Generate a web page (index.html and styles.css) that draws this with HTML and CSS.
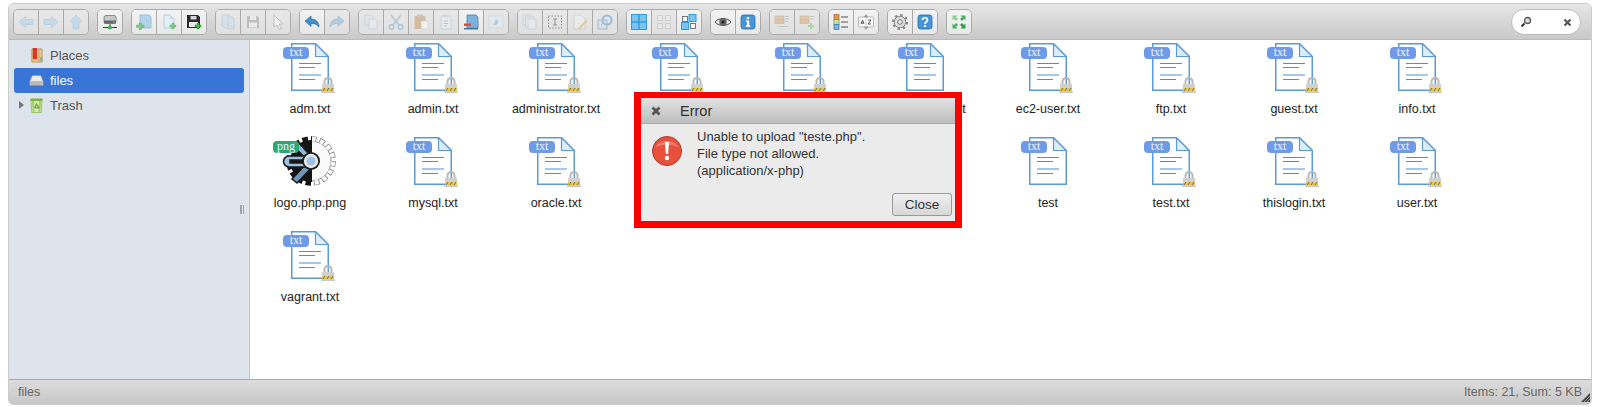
FILE: index.html
```html
<!DOCTYPE html>
<html lang="en">
<head>
    <meta charset="UTF-8">
    <title>files</title>
    <link rel="stylesheet" href="styles.css">
</head>
<body>
    <svg class="icon-defs" width="0" height="0">
        <defs>
            <clipPath id="clip-gear-left"><rect x="0" y="0" width="31" height="52"/></clipPath>
            <clipPath id="clip-gear-right"><rect x="31" y="0" width="29" height="52"/></clipPath>
        </defs>

        <!-- file types -->
        <symbol id="f-doc" viewBox="0 0 50 50">
            <path d="M5.750 .75H29.500L42.250 13.500V47.250H5.750Z" fill="#fff" stroke="#5b9bd5" stroke-width="1.500"/>
            <path d="M29.500 .75V13.500H42.250Z" fill="#dcecf8" stroke="#5b9bd5" stroke-width="1.200" stroke-linejoin="round"/>
            <path d="M13 20.500H35M13 24.500H29M13 32H35M13 36.500H29" stroke="#4a90d9" stroke-width="1.200"/>
        </symbol>
        <symbol id="f-lock" viewBox="0 0 50 50">
            <path d="M38.500 41.500V38.500a3.500 3.500 0 0 1 7 0V41.500" fill="none" stroke="#b8b8b8" stroke-width="2"/>
            <rect x="36" y="41" width="12" height="8" fill="#d0d0d0"/>
            <rect x="36" y="45" width="12" height="3" fill="#ecca4e"/>
            <path d="M37 48l2-3M41 48l2-3M45 48l2-3" stroke="#666" stroke-width="1"/>
            <rect x="35" y="48.500" width="14" height="1.500" fill="#c8c8c8"/>
        </symbol>
        <symbol id="f-logo" viewBox="0 0 60 52">
            <g clip-path="url(#clip-gear-right)">
                <circle cx="30" cy="26" r="22.300" pathLength="160" fill="none" stroke="#777" stroke-width="5" stroke-dasharray="6.400 3.600"/>
                <circle cx="30" cy="26" r="20" fill="#fafafa" stroke="#777" stroke-width=".8"/>
                <circle cx="30" cy="26" r="22" pathLength="160" fill="none" stroke="#fafafa" stroke-width="4.400" stroke-dasharray="4.800 5.200" stroke-dashoffset="-.8"/>
            </g>
            <g clip-path="url(#clip-gear-left)">
                <circle cx="30" cy="26" r="21" fill="#141414"/>
                <circle cx="30" cy="26" r="22.300" pathLength="160" fill="none" stroke="#141414" stroke-width="5" stroke-dasharray="6.400 3.600"/>
            </g>
            <path d="M17 7L37 29L33 33L13 11Z" fill="#8fb8dc" stroke="#1a1a1a" stroke-width="1.500"/>
            <path d="M30 24L11 44L16 48L34 29Z" fill="#6f98bd" stroke="#1a1a1a" stroke-width="1.500"/>
            <path d="M27 21H8a5.500 5.500 0 0 0 0 11H27V28H9v-3H27Z" fill="#9bbfe0" stroke="#1a1a1a" stroke-width="1.500"/>
            <circle cx="30" cy="26" r="9" fill="#1a1a1a"/>
            <circle cx="30" cy="26" r="7.200" fill="#e8e8e8"/>
            <circle cx="30" cy="26" r="4.600" fill="#9cc3e6"/>
        </symbol>

        <!-- sidebar -->
        <symbol id="s-places" viewBox="0 0 16 16">
            <path d="M3 1H14V15H3Z" fill="#ecc98a" stroke="#b08a45" stroke-width=".8"/>
            <rect x="4" y="0" width="4.500" height="12" fill="#d9352c"/>
            <path d="M10.500 1V15" stroke="#c9a05a"/>
            <rect x="12" y="10" width="2" height="3.500" fill="#6aa6d8"/>
        </symbol>
        <symbol id="s-drive" viewBox="0 0 16 16">
            <path d="M3.500 3H12.500L15 9V13H1V9Z" fill="#ececec" stroke="#bbb" stroke-width=".5"/>
            <rect x="1" y="8.500" width="14" height="5" rx="1" fill="#bcbcbc"/>
            <rect x="2" y="13" width="12" height="1" fill="#8a8a8a"/>
        </symbol>
        <symbol id="s-trash" viewBox="0 0 16 16">
            <path d="M2 1.500H14L13 15.500H3Z" fill="#dcedc6" stroke="#8ab54d" stroke-width=".8"/>
            <path d="M3 3H5.500L6 15H4Z" fill="#a5d06a"/>
            <path d="M13 3H10.500L10 15H12Z" fill="#a5d06a"/>
            <rect x="1.500" y=".5" width="13" height="2.800" rx="1" fill="#7cb342"/>
            <path d="M6 11L8 6.500L10.500 10.500H7" fill="none" stroke="#6da22f" stroke-width="1.300"/>
        </symbol>

        <!-- toolbar -->
        <symbol id="t-back" viewBox="0 0 16 16">
            <path d="M1 8L7.500 2.500V5.500H15V10.500H7.500V13.500Z" fill="#a5d2f0" stroke="#84b9dd" stroke-width=".8"/>
        </symbol>
        <symbol id="t-forward" viewBox="0 0 16 16">
            <path d="M15 8L8.500 2.500V5.500H1V10.500H8.500V13.500Z" fill="#a5d2f0" stroke="#84b9dd" stroke-width=".8"/>
        </symbol>
        <symbol id="t-up" viewBox="0 0 16 16">
            <path d="M8 1L14 7.500H11V15H5V7.500H2Z" fill="#a5d2f0" stroke="#84b9dd" stroke-width=".8"/>
        </symbol>
        <symbol id="t-net" viewBox="0 0 16 16">
            <rect x="2" y="1.500" width="12" height="8" rx="2" fill="#c9c9c9" stroke="#777" stroke-width=".8"/>
            <rect x="2" y="6.500" width="12" height="3" fill="#666"/>
            <rect x="11" y="7.500" width="2" height="1" fill="#5fd35f"/>
            <path d="M1 13.500H15M8 10V13" stroke="#444"/>
            <circle cx="8" cy="13.500" r="2" fill="#37b24d"/>
        </symbol>
        <symbol id="t-mkdir" viewBox="0 0 16 16">
            <path d="M4 1H13L15 3V14H4Z" fill="#b4d2ea" stroke="#8fb6d6" stroke-width=".8"/>
            <path d="M3 9h2.500v2H8v2.500H5.500v2H3v-2H.5V11H3Z" fill="#7ccb80" stroke="#56a85c" stroke-width=".4"/>
        </symbol>
        <symbol id="t-mkfile" viewBox="0 0 16 16">
            <path d="M3 1H9L13 5V14H3Z" fill="#e4eff8" stroke="#a6c6e0" stroke-width=".8"/>
            <path d="M9 1V5H13Z" fill="#c4dcef"/>
            <path d="M11 9h2v2h2v2h-2v2h-2v-2H9v-2h2Z" fill="#7ccb80" stroke="#56a85c" stroke-width=".4"/>
        </symbol>
        <symbol id="t-upload" viewBox="0 0 16 16">
            <path d="M1 1H12L14 3V14H1Z" fill="#2a2a2a"/>
            <rect x="4.500" y="2" width="6" height="3.500" fill="#d4d4d4"/>
            <rect x="3" y="8" width="9" height="5" fill="#eaeaea"/>
            <path d="M11 9h2v2h2v2h-2v2h-2v-2H9v-2h2Z" fill="#43b649" stroke="#2c8a34" stroke-width=".4"/>
        </symbol>
        <symbol id="t-open" viewBox="0 0 16 16">
            <path d="M2 1H9L14 4V15H7L2 12Z" fill="#c8dcec" stroke="#9db9cf" stroke-width=".8"/>
            <path d="M8 1V13" stroke="#9db9cf" stroke-width=".8"/>
        </symbol>
        <symbol id="t-save" viewBox="0 0 16 16">
            <path d="M2 2H12L14 4V14H2Z" fill="#999"/>
            <rect x="5" y="2" width="6" height="4" fill="#eee"/>
            <rect x="4" y="8.500" width="8" height="5" fill="#eee"/>
        </symbol>
        <symbol id="t-pointer" viewBox="0 0 16 16">
            <path d="M4 1L13 10H9L11.500 15L9.500 15.500L7 11L4 13Z" fill="#fff" stroke="#888" stroke-width=".8"/>
        </symbol>
        <symbol id="t-undo" viewBox="0 0 16 16">
            <path d="M1 7L7 2V5C12 5 15 8 15 13C13 10.500 11 9.500 7 9.500V12.500Z" fill="#3f8fd2" stroke="#1f5f96" stroke-width=".6"/>
        </symbol>
        <symbol id="t-redo" viewBox="0 0 16 16">
            <path d="M15 7L9 2V5C4 5 1 8 1 13C3 10.500 5 9.500 9 9.500V12.500Z" fill="#7fb2dd" stroke="#5a90bd" stroke-width=".6"/>
        </symbol>
        <symbol id="t-copy" viewBox="0 0 16 16">
            <path d="M2 1H8L10 3V11H2Z" fill="#dce8f2" stroke="#a2bbcf" stroke-width=".8"/>
            <path d="M6 5H12L14 7V15H6Z" fill="#e8f0f7" stroke="#a2bbcf" stroke-width=".8"/>
        </symbol>
        <symbol id="t-cut" viewBox="0 0 16 16">
            <path d="M3 1L11 11M13 1L5 11" stroke="#8fa9bd" stroke-width="1.600"/>
            <circle cx="3.500" cy="13" r="2.300" fill="none" stroke="#6fa8d6" stroke-width="1.400"/>
            <circle cx="12.500" cy="13" r="2.300" fill="none" stroke="#6fa8d6" stroke-width="1.400"/>
        </symbol>
        <symbol id="t-paste" viewBox="0 0 16 16">
            <rect x="1.500" y="2" width="11" height="13" rx="1" fill="#c9925a"/>
            <rect x="4" y=".5" width="6" height="3" fill="#a8a8a8"/>
            <path d="M8 7H13L15 9V15H8Z" fill="#fff" stroke="#bbb" stroke-width=".6"/>
        </symbol>
        <symbol id="t-duplicate" viewBox="0 0 16 16">
            <rect x="3" y="2" width="10" height="13" rx="1" fill="#eef3f7" stroke="#9fb3c2" stroke-width=".8"/>
            <rect x="5.500" y=".8" width="5" height="2.500" fill="#b5c5d2"/>
            <path d="M6 7H10M6 9.500H10M6 12H9" stroke="#7ea4bf"/>
        </symbol>
        <symbol id="t-rm" viewBox="0 0 16 16">
            <path d="M4 1H13L15 3V14H4Z" fill="#6aa6d8" stroke="#356f9f" stroke-width=".8"/>
            <rect x="1" y="14" width="14" height="1.500" fill="#2f5f8a"/>
            <rect x="1" y="9.500" width="7" height="2.500" fill="#d9332b"/>
        </symbol>
        <symbol id="t-extract" viewBox="0 0 16 16">
            <rect x="1" y="2" width="14" height="12" fill="#e2edf5" stroke="#b8ccdb" stroke-width=".8"/>
            <path d="M5 11L8 5L11 7.500L8.500 11Z" fill="#8fb2cc"/>
        </symbol>
        <symbol id="t-selectall" viewBox="0 0 16 16">
            <rect x="1" y="1" width="8" height="10" fill="#dde8f1" stroke="#9fb7ca" stroke-width=".8"/>
            <rect x="3.500" y="3" width="8" height="10" fill="#e3ecf3" stroke="#9fb7ca" stroke-width=".8"/>
            <rect x="6" y="5" width="8" height="10" fill="#ebf2f7" stroke="#9fb7ca" stroke-width=".8"/>
        </symbol>
        <symbol id="t-rename" viewBox="0 0 16 16">
            <rect x="1.500" y="2" width="13" height="12" fill="none" stroke="#444" stroke-dasharray="1.500 1.500"/>
            <path d="M6 5H10M6 11H10M8 5V11" stroke="#444"/>
        </symbol>
        <symbol id="t-edit" viewBox="0 0 16 16">
            <path d="M2 1H9L13 5V15H2Z" fill="#edf2f6" stroke="#a8bbc9" stroke-width=".8"/>
            <path d="M6 14L14 6L15.500 7.500L7.500 15.500L5.500 15.500Z" fill="#d8b45a"/>
        </symbol>
        <symbol id="t-resize" viewBox="0 0 16 16">
            <rect x="1" y="6" width="9" height="9" fill="#cfe0ee" stroke="#5d8cb3" stroke-width=".9"/>
            <circle cx="10" cy="6" r="4.500" fill="none" stroke="#4f94cc" stroke-width="2"/>
            <path d="M4 11L7 8" stroke="#5d8cb3"/>
        </symbol>
        <symbol id="t-icons" viewBox="0 0 16 16">
            <rect x=".5" y=".5" width="15" height="15" fill="#7cc4f0" stroke="#2f9be0"/>
            <path d="M8 0V16M0 8H16" stroke="#2f9be0" stroke-width="1.500"/>
        </symbol>
        <symbol id="t-grid" viewBox="0 0 16 16">
            <rect x="1.500" y="1.500" width="5" height="5" fill="#f0f0f0" stroke="#bcbcbc"/>
            <rect x="9.500" y="1.500" width="5" height="5" fill="#f0f0f0" stroke="#bcbcbc"/>
            <rect x="1.500" y="9.500" width="5" height="5" fill="#f0f0f0" stroke="#bcbcbc"/>
            <rect x="9.500" y="9.500" width="5" height="5" fill="#f0f0f0" stroke="#bcbcbc"/>
        </symbol>
        <symbol id="t-mixed" viewBox="0 0 16 16">
            <rect x="1.500" y="2.500" width="5" height="5" fill="#fff" stroke="#777"/>
            <rect x="8" y=".5" width="7" height="7" fill="#7cc4f0" stroke="#2f9be0"/>
            <rect x=".5" y="8.500" width="7" height="7" fill="#7cc4f0" stroke="#2f9be0"/>
            <rect x="9.500" y="9.500" width="5" height="5" fill="#fff" stroke="#777"/>
        </symbol>
        <symbol id="t-eye" viewBox="0 0 16 16">
            <path d="M0 8C3 3.500 13 3.500 16 8C13 12.500 3 12.500 0 8Z" fill="#e8e8e8" stroke="#444"/>
            <circle cx="8" cy="8" r="3.700" fill="#666"/>
            <circle cx="8" cy="8" r="1.500" fill="#222"/>
        </symbol>
        <symbol id="t-info" viewBox="0 0 16 16">
            <rect x="1" y="1" width="14" height="14" rx="2.500" fill="#4a95d6" stroke="#2a6ba6" stroke-width=".8"/>
            <rect x="6.800" y="3" width="2.400" height="2.200" fill="#fff"/>
            <path d="M6 6.500H9.200V11.500H10.200V13H6V11.500H7V8H6Z" fill="#fff"/>
        </symbol>
        <symbol id="t-archive" viewBox="0 0 16 16">
            <rect x="1" y="2" width="9" height="3.500" fill="#dcae7c" stroke="#b5875a" stroke-width=".6"/>
            <rect x="1" y="6" width="9" height="3.500" fill="#d9a877" stroke="#b5875a" stroke-width=".6"/>
            <path d="M11 2.500H15M11 5H15M11 7.500H14M4 12.500H14" stroke="#aaa"/>
        </symbol>
        <symbol id="t-archive-add" viewBox="0 0 16 16">
            <rect x="1" y="2" width="9" height="3.500" fill="#dcae7c" stroke="#b5875a" stroke-width=".6"/>
            <rect x="1" y="6" width="9" height="3.500" fill="#d9a877" stroke="#b5875a" stroke-width=".6"/>
            <path d="M11 2.500H15M11 5H15" stroke="#aaa"/>
            <path d="M11 9h2v2h2v2h-2v2h-2v-2H9v-2h2Z" fill="#74c67a"/>
        </symbol>
        <symbol id="t-list" viewBox="0 0 16 16">
            <rect x="1" y=".5" width="5" height="5" fill="#e8964f" stroke="#a86a30" stroke-width=".7"/>
            <rect x="1" y="5.500" width="5" height="5" fill="#bfe3a0" stroke="#5b9a3c" stroke-width=".7"/>
            <rect x="1" y="10.500" width="5" height="5" fill="#7cb0e0" stroke="#3b75ad" stroke-width=".7"/>
            <path d="M8 3H15M8 8H15M8 13H15" stroke="#555" stroke-width="1.200"/>
        </symbol>
        <symbol id="t-sort" viewBox="0 0 16 16">
            <rect x=".5" y="3" width="15" height="10" rx="1" fill="#fff" stroke="#999" stroke-width=".7"/>
            <path d="M8 .5L10 3H6ZM8 15.500L10 13H6ZM8 3V13" fill="#999" stroke="#999" stroke-width=".5"/>
            <path d="M3 10L4.500 6L6 10M3.500 9H5.500M10 6H13L10 10H13" fill="none" stroke="#444" stroke-width=".9"/>
        </symbol>
        <symbol id="t-prefs" viewBox="0 0 16 16">
            <circle cx="8" cy="8" r="5.800" fill="#dcdcdc" stroke="#888"/>
            <circle cx="8" cy="8" r="7" fill="none" stroke="#888" stroke-width="2" stroke-dasharray="2.400 3.100"/>
            <circle cx="8" cy="8" r="2.300" fill="#eee" stroke="#777"/>
        </symbol>
        <symbol id="t-help" viewBox="0 0 16 16">
            <rect x="1" y="1" width="14" height="14" rx="2.500" fill="#4a95d6" stroke="#2a6ba6" stroke-width=".8"/>
            <path d="M5.500 6C5.500 3 10.500 3 10.500 6C10.500 8 8 8 8 10" fill="none" stroke="#fff" stroke-width="1.700"/>
            <rect x="7" y="11" width="2" height="2" fill="#fff"/>
        </symbol>
        <symbol id="t-full" viewBox="0 0 16 16">
            <path d="M1.500 1.500H6.500L5 3L7 5L5 7L3 5L1.500 6.500Z" fill="#8ccf8c"/>
            <path d="M14.500 1.500H9.500L11 3L9 5L11 7L13 5L14.500 6.500Z" fill="#4fae5f"/>
            <path d="M1.500 14.500H6.500L5 13L7 11L5 9L3 11L1.500 9.500Z" fill="#4fae5f"/>
            <path d="M14.500 14.500H9.500L11 13L9 11L11 9L13 11L14.500 9.500Z" fill="#3a9a4e"/>
        </symbol>
    </svg>

    <div class="finder">
        <div class="toolbar">
            <div class="tool-group">
                <div class="tool-btn off"><svg><use href="#t-back"/></svg></div>
                <div class="tool-btn off"><svg><use href="#t-forward"/></svg></div>
                <div class="tool-btn off"><svg><use href="#t-up"/></svg></div>
            </div>
            <div class="tool-group">
                <div class="tool-btn"><svg><use href="#t-net"/></svg></div>
            </div>
            <div class="tool-group">
                <div class="tool-btn"><svg><use href="#t-mkdir"/></svg></div>
                <div class="tool-btn"><svg><use href="#t-mkfile"/></svg></div>
                <div class="tool-btn"><svg><use href="#t-upload"/></svg></div>
            </div>
            <div class="tool-group">
                <div class="tool-btn off"><svg><use href="#t-open"/></svg></div>
                <div class="tool-btn off"><svg><use href="#t-save"/></svg></div>
                <div class="tool-btn off"><svg><use href="#t-pointer"/></svg></div>
            </div>
            <div class="tool-group">
                <div class="tool-btn"><svg><use href="#t-undo"/></svg></div>
                <div class="tool-btn off"><svg><use href="#t-redo"/></svg></div>
            </div>
            <div class="tool-group">
                <div class="tool-btn off"><svg><use href="#t-copy"/></svg></div>
                <div class="tool-btn off"><svg><use href="#t-cut"/></svg></div>
                <div class="tool-btn off"><svg><use href="#t-paste"/></svg></div>
                <div class="tool-btn off"><svg><use href="#t-duplicate"/></svg></div>
                <div class="tool-btn dim"><svg><use href="#t-rm"/></svg></div>
                <div class="tool-btn off"><svg><use href="#t-extract"/></svg></div>
            </div>
            <div class="tool-group">
                <div class="tool-btn off"><svg><use href="#t-selectall"/></svg></div>
                <div class="tool-btn off"><svg><use href="#t-rename"/></svg></div>
                <div class="tool-btn off"><svg><use href="#t-edit"/></svg></div>
                <div class="tool-btn off"><svg><use href="#t-resize"/></svg></div>
            </div>
            <div class="tool-group">
                <div class="tool-btn"><svg><use href="#t-icons"/></svg></div>
                <div class="tool-btn off"><svg><use href="#t-grid"/></svg></div>
                <div class="tool-btn"><svg><use href="#t-mixed"/></svg></div>
            </div>
            <div class="tool-group">
                <div class="tool-btn"><svg><use href="#t-eye"/></svg></div>
                <div class="tool-btn"><svg><use href="#t-info"/></svg></div>
            </div>
            <div class="tool-group">
                <div class="tool-btn off"><svg><use href="#t-archive"/></svg></div>
                <div class="tool-btn off"><svg><use href="#t-archive-add"/></svg></div>
            </div>
            <div class="tool-group">
                <div class="tool-btn"><svg><use href="#t-list"/></svg></div>
                <div class="tool-btn"><svg><use href="#t-sort"/></svg></div>
            </div>
            <div class="tool-group">
                <div class="tool-btn"><svg><use href="#t-prefs"/></svg></div>
                <div class="tool-btn"><svg><use href="#t-help"/></svg></div>
            </div>
            <div class="tool-group">
                <div class="tool-btn"><svg><use href="#t-full"/></svg></div>
            </div>
            <div class="search-box">
                <svg class="search-glass" width="12" height="12" viewBox="0 0 12 12">
                    <path d="M4.500 7.500L1.500 10.500" stroke="#333" stroke-width="2.200"/>
                    <circle cx="7.500" cy="4.500" r="3" fill="#ddd" stroke="#555" stroke-width="1.300"/>
                </svg>
                <svg class="search-clear" width="9" height="9" viewBox="0 0 9 9">
                    <path d="M1.500 1.500L7.500 7.500M7.500 1.500L1.500 7.500" stroke="#555" stroke-width="2.200"/>
                </svg>
            </div>
        </div>

        <div class="main">
            <div class="sidebar">
                <div class="tree-row">
                    <svg class="tree-icon"><use href="#s-places"/></svg>
                    <span>Places</span>
                </div>
                <div class="tree-row active">
                    <svg class="tree-icon"><use href="#s-drive"/></svg>
                    <span>files</span>
                </div>
                <div class="tree-row">
                    <span class="tree-arrow"></span>
                    <svg class="tree-icon"><use href="#s-trash"/></svg>
                    <span>Trash</span>
                </div>
                <div class="splitter"></div>
            </div>

            <div class="files">
                <div class="file"><div class="file-icon"><svg><use href="#f-doc"/><use href="#f-lock"/></svg><span class="kind txt">txt</span></div><div class="file-name">adm.txt</div></div>
                <div class="file"><div class="file-icon"><svg><use href="#f-doc"/><use href="#f-lock"/></svg><span class="kind txt">txt</span></div><div class="file-name">admin.txt</div></div>
                <div class="file"><div class="file-icon"><svg><use href="#f-doc"/><use href="#f-lock"/></svg><span class="kind txt">txt</span></div><div class="file-name">administrator.txt</div></div>
                <div class="file"><div class="file-icon"><svg><use href="#f-doc"/><use href="#f-lock"/></svg><span class="kind txt">txt</span></div><div class="file-name"></div></div>
                <div class="file"><div class="file-icon"><svg><use href="#f-doc"/><use href="#f-lock"/></svg><span class="kind txt">txt</span></div><div class="file-name"></div></div>
                <div class="file"><div class="file-icon"><svg><use href="#f-doc"/></svg><span class="kind txt">txt</span></div><div class="file-name">deployment.txt</div></div>
                <div class="file"><div class="file-icon"><svg><use href="#f-doc"/><use href="#f-lock"/></svg><span class="kind txt">txt</span></div><div class="file-name">ec2-user.txt</div></div>
                <div class="file"><div class="file-icon"><svg><use href="#f-doc"/><use href="#f-lock"/></svg><span class="kind txt">txt</span></div><div class="file-name">ftp.txt</div></div>
                <div class="file"><div class="file-icon"><svg><use href="#f-doc"/><use href="#f-lock"/></svg><span class="kind txt">txt</span></div><div class="file-name">guest.txt</div></div>
                <div class="file"><div class="file-icon"><svg><use href="#f-doc"/><use href="#f-lock"/></svg><span class="kind txt">txt</span></div><div class="file-name">info.txt</div></div>

                <div class="file"><div class="file-icon"><svg class="logo-img" viewBox="0 0 60 52"><use href="#f-logo"/></svg><span class="kind png">png</span></div><div class="file-name">logo.php.png</div></div>
                <div class="file"><div class="file-icon"><svg><use href="#f-doc"/><use href="#f-lock"/></svg><span class="kind txt">txt</span></div><div class="file-name">mysql.txt</div></div>
                <div class="file"><div class="file-icon"><svg><use href="#f-doc"/><use href="#f-lock"/></svg><span class="kind txt">txt</span></div><div class="file-name">oracle.txt</div></div>
                <div class="file"></div>
                <div class="file"></div>
                <div class="file"></div>
                <div class="file"><div class="file-icon"><svg><use href="#f-doc"/></svg><span class="kind txt">txt</span></div><div class="file-name">test</div></div>
                <div class="file"><div class="file-icon"><svg><use href="#f-doc"/><use href="#f-lock"/></svg><span class="kind txt">txt</span></div><div class="file-name">test.txt</div></div>
                <div class="file"><div class="file-icon"><svg><use href="#f-doc"/><use href="#f-lock"/></svg><span class="kind txt">txt</span></div><div class="file-name">thislogin.txt</div></div>
                <div class="file"><div class="file-icon"><svg><use href="#f-doc"/><use href="#f-lock"/></svg><span class="kind txt">txt</span></div><div class="file-name">user.txt</div></div>

                <div class="file"><div class="file-icon"><svg><use href="#f-doc"/><use href="#f-lock"/></svg><span class="kind txt">txt</span></div><div class="file-name">vagrant.txt</div></div>
            </div>
        </div>

        <div class="statusbar">
            <span>files</span>
            <span>Items: 21, Sum: 5 KB</span>
            <svg class="resize-grip" width="9" height="9" viewBox="0 0 9 9">
                <path d="M9 0L0 9H9Z" fill="#444"/>
                <path d="M9 3L3 9M9 6L6 9" stroke="#ccc" stroke-width=".7"/>
            </svg>
        </div>

        <div class="dialog">
            <div class="dialog-title">
                <svg width="10" height="10" viewBox="0 0 10 10">
                    <path d="M1.500 1.500L8.500 8.500M8.500 1.500L1.500 8.500" stroke="#555" stroke-width="2.800"/>
                </svg>
                <span>Error</span>
            </div>
            <div class="dialog-body">
                <svg class="dialog-icon" width="32" height="32" viewBox="0 0 32 32">
                    <circle cx="16" cy="16" r="14.500" fill="#e9503c" stroke="#a83a2a"/>
                    <path d="M5 12C8 4 24 4 27 12C20 9 12 9 5 12Z" fill="#fff" opacity=".25"/>
                    <path d="M14 7H18L17.200 19H14.800Z" fill="#fff"/>
                    <circle cx="16" cy="23" r="2.200" fill="#fff"/>
                </svg>
                <div class="dialog-text">
                    <div>Unable to upload "teste.php".</div>
                    <div>File type not allowed.</div>
                    <div>(application/x-php)</div>
                </div>
            </div>
            <div class="dialog-foot">
                <button class="dialog-btn" type="button">Close</button>
            </div>
        </div>
    </div>
</body>
</html>
```

FILE: styles.css
```css
html, body {
    height: 100%;
}

body {
    margin: 0;
    padding: 3px 8px;
    box-sizing: border-box;
    overflow: hidden;
    background-color: white;
    font-family: "Liberation Sans", Arial, sans-serif;
    font-size: 12.5px;
    color: #222;
}

.icon-defs {
    position: absolute;
}

.finder {
    position: relative;
    display: flex;
    flex-direction: column;
    height: 402px;
    box-sizing: border-box;
    border: 1px solid #ccc;
    border-radius: 5px;
    overflow: hidden;
}

/* toolbar */
.toolbar {
    display: flex;
    gap: 8px;
    flex: none;
    height: 36px;
    box-sizing: border-box;
    padding: 5px 10px 0 4px;
    background: linear-gradient(#e6e6e6, #c9c9c9);
    border-bottom: 1px solid #bbb;
}

.tool-group {
    display: flex;
    height: 26px;
    box-sizing: border-box;
    border: 1px solid #aaa;
    border-radius: 5px;
    overflow: hidden;
}

.tool-btn {
    display: flex;
    align-items: center;
    justify-content: center;
    width: 25px;
    box-sizing: border-box;
    border-left: 1px solid #aaa;
    background: linear-gradient(#f3f3f3, #e8e8e8);
}

.tool-btn:first-child {
    width: 24px;
    border-left: none;
}

.tool-btn svg {
    width: 16px;
    height: 16px;
}

.tool-btn.off {
    background: linear-gradient(#e8e8e8, #e0e0e0);
}

.tool-btn.off svg {
    opacity: 0.5;
}

.tool-btn.dim svg {
    opacity: 0.85;
}

.search-box {
    display: flex;
    align-items: center;
    justify-content: space-between;
    width: 70px;
    height: 26px;
    box-sizing: border-box;
    margin-left: auto;
    padding: 0 8px;
    background-color: white;
    border: 1px solid #bbb;
    border-radius: 13px;
}

/* main area */
.main {
    display: flex;
    flex: 1;
    min-height: 0;
}

.sidebar {
    position: relative;
    flex: none;
    width: 241px;
    box-sizing: border-box;
    padding: 3px 5px;
    background-color: #dde4eb;
    border-right: 1px solid #c4c9ce;
}

.tree-row {
    position: relative;
    display: flex;
    align-items: center;
    gap: 6px;
    height: 25px;
    padding-left: 15px;
    color: #555;
    font-size: 13px;
}

.tree-row.active {
    background-color: #3875d7;
    border-radius: 3px;
    color: white;
}

.tree-icon {
    width: 15px;
    height: 15px;
}

.tree-arrow {
    position: absolute;
    left: 5px;
    top: 8px;
    border-left: 5px solid #777;
    border-top: 4px solid transparent;
    border-bottom: 4px solid transparent;
}

.splitter {
    position: absolute;
    right: 5px;
    top: 165px;
    width: 1px;
    height: 9px;
    border-left: 2px solid #a0a4a8;
    border-right: 1px solid #a0a4a8;
}

.files {
    display: grid;
    grid-template-columns: repeat(10, 120px);
    grid-auto-rows: 94px;
    column-gap: 3px;
    flex: 1;
    padding-top: 3px;
    background-color: white;
}

.file {
    text-align: center;
}

.file-icon {
    position: relative;
    width: 48px;
    height: 48px;
    margin: 0 auto;
}

.file-icon svg {
    display: block;
    width: 50px;
    height: 50px;
    overflow: visible;
}

.file-icon svg.logo-img {
    position: absolute;
    left: -5px;
    top: -2px;
    width: 60px;
    height: 52px;
}

.kind {
    position: absolute;
    left: -3px;
    top: 4px;
    width: 26px;
    height: 12px;
    border-radius: 4px;
    color: #eef3fd;
    font-family: "Liberation Serif", "DejaVu Serif", serif;
    font-size: 12px;
    line-height: 11px;
    text-align: center;
}

.kind.txt {
    background-color: #6f9ae8;
}

.kind.png {
    left: -13px;
    background-color: #2aa876;
}

.file-name {
    margin-top: 10px;
    line-height: 16px;
    white-space: nowrap;
}

/* statusbar */
.statusbar {
    position: relative;
    display: flex;
    align-items: center;
    justify-content: space-between;
    flex: none;
    height: 25px;
    box-sizing: border-box;
    padding: 0 9px 0 9px;
    background: linear-gradient(#dcdcdc, #c8c8c8);
    border-top: 1px solid #aaa;
    color: #666;
}

.resize-grip {
    position: absolute;
    right: 1px;
    bottom: 2px;
}

/* error dialog */
.dialog {
    position: absolute;
    left: 625px;
    top: 88px;
    display: flex;
    flex-direction: column;
    width: 328px;
    height: 136px;
    box-sizing: border-box;
    background-color: #ebebeb;
    border: 7px solid #f00;
    border-top-width: 6px;
    font-size: 13px;
    color: #333;
}

.dialog-title {
    display: flex;
    align-items: center;
    gap: 19px;
    flex: none;
    height: 26px;
    box-sizing: border-box;
    padding: 1px 0 0 10px;
    background: linear-gradient(#e2e2e2, #bdbdbd);
    border-bottom: 1px solid #aaa;
    font-size: 14.5px;
}

.dialog-body {
    display: flex;
    gap: 14px;
    padding: 4px 0 0 10px;
}

.dialog-icon {
    flex: none;
    margin-top: 7px;
}

.dialog-text {
    line-height: 17px;
}

.dialog-foot {
    display: flex;
    justify-content: flex-end;
    margin-top: auto;
    padding: 0 3px 5px 0;
}

.dialog-btn {
    width: 60px;
    height: 23px;
    padding: 0;
    background: linear-gradient(#efefef, #d8d8d8);
    border: 1px solid #999;
    border-radius: 3px;
    color: #333;
    font-family: inherit;
    font-size: 13.5px;
}
```
